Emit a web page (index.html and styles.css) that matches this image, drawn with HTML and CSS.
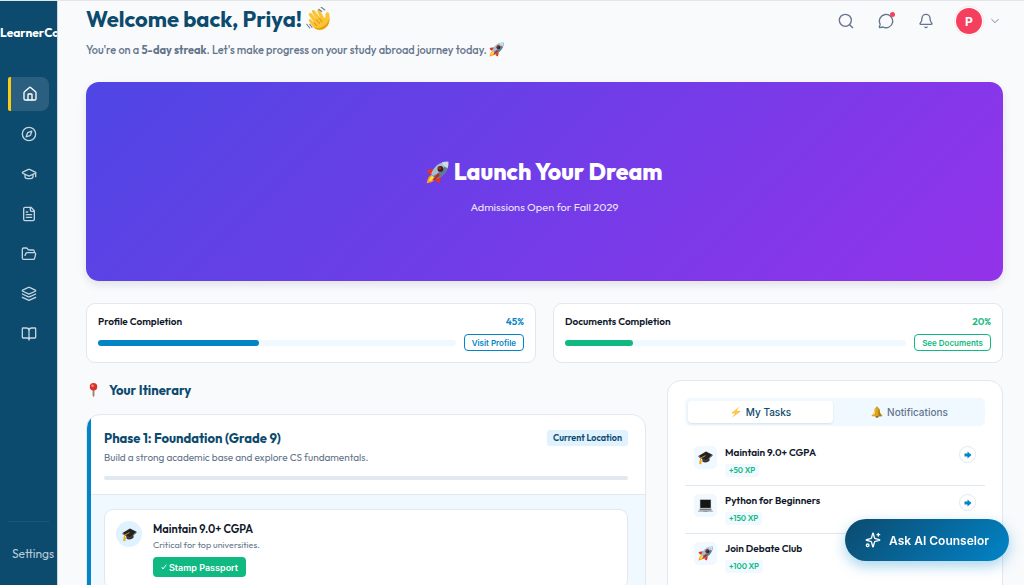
FILE: index.html
```html
<!DOCTYPE html>
<html lang="en">
<head>
	<meta charset="utf-8">
	<meta name="viewport" content="width=device-width,initial-scale=1">
	<title>Dashboard</title>
	<link rel="stylesheet" href="styles.css">
</head>
<body>
	<svg class="sprite" aria-hidden="true">
		<symbol id="rocket" viewBox="0 0 32 32">
			<path d="M10 11L1 13l3 5 8 0z" fill="#e8321f"/>
			<path d="M21 22l-2 9-5-3 0-8z" fill="#e8321f"/>
			<path d="M8 19c-4 1-6 6-7 12 6-1 11-3 12-7z" fill="#f9a01b"/>
			<path d="M9 21c-3 1-4 4-5 7 4-1 6-2 7-5z" fill="#ffe14d"/>
			<path d="M31 1C20 0 11 7 7 18l7 7C25 21 32 12 31 1z" fill="#a9bfce"/>
			<path d="M31 1C25 10 18 17 10 21l4 4C25 21 32 12 31 1z" fill="#5f7b90"/>
			<path d="M31 1c-3 0-6 0-9 1 2 4 4 6 8 8 1-3 1-6 1-9z" fill="#ccdce6"/>
			<circle cx="20" cy="11" r="4" fill="#3b1d1f"/>
			<circle cx="19" cy="10" r="2" fill="#a42a26"/>
			<path d="M17 17l-8 9 2 1 8-7z" fill="#cc2218"/>
		</symbol>
		<symbol id="wave" viewBox="0 0 32 32">
			<path d="M9 26L4 19c-1-3 2-4 3-2l4 4-7-10c-1-3 2-4 4-2l6 8-6-10c-1-3 2-4 4-2l7 10-4-9c-1-3 3-4 4-1l5 9c2 1 2-1 2-4 0-4 4-4 5-1 1 6 1 13-4 18-6 6-13 5-18-1z" fill="#fbc434"/>
			<path d="M11 21l3 4M14 17l4 5M18 15l3 5" fill="none" stroke="#d98b12" stroke-width="1.300" stroke-linecap="round"/>
			<path d="M31 14c1 7-2 13-8 15-5 2-10 1-14-3 6 3 12 3 17-2 3-3 5-6 5-10z" fill="#e8990f"/>
			<path d="M17 3l4 3M20 0l5 4M1 23l4 5M5 23l3 4" fill="none" stroke="#747b83" stroke-width="1.500" stroke-linecap="round"/>
		</symbol>
		<symbol id="pin" viewBox="0 0 32 32">
			<path d="M14 13h4v13l-2 5-2-5z" fill="#a0826e"/>
			<circle cx="16" cy="8" r="8" fill="#d8322c"/>
			<circle cx="14" cy="6" r="3" fill="#f58478"/>
		</symbol>
		<symbol id="cap" viewBox="0 0 32 32">
			<path d="M8 15l15-3 2 10c-4 5-11 6-15 3z" fill="#343434"/>
			<path d="M1 13L17 3l14 7-14 12z" fill="#222"/>
			<path d="M1 13l16 9v2L1 15zM17 22l14-12v2L17 24z" fill="#474747"/>
			<path d="M16 12L6 17l-1 6" fill="none" stroke="#e8960f" stroke-width="2"/>
			<path d="M4 21l4 1-1 9-5-2z" fill="#f3a825"/>
		</symbol>
		<symbol id="laptop" viewBox="0 0 32 32">
			<path d="M4 3h24v19H4z" fill="#a9acb0"/>
			<path d="M5 4h22v17H5z" fill="#151515"/>
			<path d="M4 22h24l4 7H0z" fill="#c4c7ca"/>
			<path d="M5 23h22l2 3H3z" fill="#75797d"/>
			<path d="M12 27h8l1 2H11zM0 29h32v1H0z" fill="#999ca0"/>
		</symbol>
		<symbol id="bolt" viewBox="0 0 32 32">
			<path d="M26 1L3 19l11 1-9 11 24-17-12-2z" fill="#ffb62e"/>
			<path d="M23 4L7 18l10 0-6 8 14-11-12-1z" fill="#ffcf57"/>
		</symbol>
		<symbol id="goldbell" viewBox="0 0 32 32">
			<circle cx="16" cy="27" r="4" fill="#7c5a12"/>
			<path d="M14 2h4v4h-4z" fill="#a67816"/>
			<path d="M16 4c6 0 8 5 8 10 0 6 2 8 6 10v3H2v-3c4-2 6-4 6-10 0-5 2-10 8-10z" fill="#dba520"/>
			<path d="M13 7c-3 3-1 11-4 16H5c4-4 3-8 4-12 1-3 2-4 4-4z" fill="#f8dc74"/>
			<path d="M20 6c5 5 1 11 8 18v3h-8c-2-8 1-13 0-21z" fill="#ae7b14"/>
		</symbol>
		<symbol id="arrow" viewBox="0 0 16 16">
			<path d="M1 5h6V1l8 7-8 7v-4H1z" fill="#0284c7"/>
		</symbol>
	</svg>

	<div class="app">
		<aside class="sidebar">
			<a class="brand" href="#">LearnerCo</a>
			<nav class="nav">
				<a href="#" class="nav-item active" aria-label="Home"><svg class="icon" viewBox="0 0 24 24"><path d="M15 21v-8a1 1 0 0 0-1-1h-4a1 1 0 0 0-1 1v8"/><path d="M3 10a2 2 0 0 1 .7-1.500l7-6a2 2 0 0 1 2.600 0l7 6A2 2 0 0 1 21 10v9a2 2 0 0 1-2 2H5a2 2 0 0 1-2-2z"/></svg></a>
				<a href="#" class="nav-item" aria-label="Explore"><svg class="icon" viewBox="0 0 24 24"><circle cx="12" cy="12" r="10"/><path d="M16.200 7.800l-1.800 5.400a2 2 0 0 1-1.200 1.200l-5.400 1.800 1.800-5.400a2 2 0 0 1 1.200-1.200z"/></svg></a>
				<a href="#" class="nav-item" aria-label="Universities"><svg class="icon" viewBox="0 0 24 24"><path d="M21.400 10.900a1 1 0 0 0 0-1.800L12.800 5.200a2 2 0 0 0-1.600 0L2.600 9.100a1 1 0 0 0 0 1.800l8.600 3.900a2 2 0 0 0 1.600 0z"/><path d="M22 10v6M6 12.500V16a6 3 0 0 0 12 0v-3.500"/></svg></a>
				<a href="#" class="nav-item" aria-label="Applications"><svg class="icon" viewBox="0 0 24 24"><path d="M15 2H6a2 2 0 0 0-2 2v16a2 2 0 0 0 2 2h12a2 2 0 0 0 2-2V7z"/><path d="M14 2v4a2 2 0 0 0 2 2h4M10 9H8M16 13H8M16 17H8"/></svg></a>
				<a href="#" class="nav-item" aria-label="Documents"><svg class="icon" viewBox="0 0 24 24"><path d="M6 14l1.500-2.900A2 2 0 0 1 9.200 10H20a2 2 0 0 1 1.900 2.500l-1.500 6a2 2 0 0 1-2 1.500H4a2 2 0 0 1-2-2V5a2 2 0 0 1 2-2h3.900a2 2 0 0 1 1.700.9l.8 1.200a2 2 0 0 0 1.700.9H18a2 2 0 0 1 2 2v2"/></svg></a>
				<a href="#" class="nav-item" aria-label="Portfolio"><svg class="icon" viewBox="0 0 24 24"><path d="M12.800 2.200a2 2 0 0 0-1.600 0L2.600 6.100a1 1 0 0 0 0 1.800l8.600 3.900a2 2 0 0 0 1.600 0l8.600-3.900a1 1 0 0 0 0-1.800z"/><path d="M22 12l-9.200 4.200a2 2 0 0 1-1.600 0L2 12M22 17l-9.200 4.200a2 2 0 0 1-1.600 0L2 17"/></svg></a>
				<a href="#" class="nav-item" aria-label="Resources"><svg class="icon" viewBox="0 0 24 24"><path d="M12 7v14M3 18a1 1 0 0 1-1-1V4a1 1 0 0 1 1-1h5a4 4 0 0 1 4 4 4 4 0 0 1 4-4h5a1 1 0 0 1 1 1v13a1 1 0 0 1-1 1h-6a3 3 0 0 0-3 3 3 3 0 0 0-3-3z"/></svg></a>
			</nav>
			<div class="sidebar-foot"><a href="#">Settings</a></div>
		</aside>

		<main class="main">
			<header class="topbar">
				<div>
					<h1>Welcome back, Priya! <svg class="emoji-xl"><use href="#wave"/></svg></h1>
					<p class="streak">You're on a <strong>5-day streak</strong>. Let's make progress on your study abroad journey today. <svg class="emoji-md"><use href="#rocket"/></svg></p>
				</div>
				<div class="actions">
					<button type="button" aria-label="Search"><svg class="icon" viewBox="0 0 24 24"><circle cx="11" cy="11" r="9"/><path d="M22 22l-4.500-4.500"/></svg></button>
					<button type="button" aria-label="Messages" class="has-dot"><svg class="icon" viewBox="0 0 24 24"><path d="M3 16.300a2 2 0 0 1 .1 1.200l-1.100 3.300a1 1 0 0 0 1.200 1.200l3.400-1a2 2 0 0 1 1.100.1A10 10 0 1 0 3 16.300"/></svg></button>
					<button type="button" aria-label="Alerts"><svg class="icon" viewBox="0 0 24 24"><path d="M10.300 21a2 2 0 0 0 3.400 0M3.300 15.300A1 1 0 0 0 4 17h16a1 1 0 0 0 .7-1.700C19.400 14 18 12.500 18 8A6 6 0 0 0 6 8c0 4.500-1.400 6-2.700 7.300"/></svg></button>
					<button type="button" class="profile" aria-label="Account"><span class="avatar">P</span><svg class="chevron" viewBox="0 0 24 24"><path d="M4 8l8 8 8-8"/></svg></button>
				</div>
			</header>

			<section class="banner">
				<h2><svg class="emoji-lg"><use href="#rocket"/></svg> Launch Your Dream</h2>
				<p>Admissions Open for Fall 2029</p>
			</section>

			<section class="stats">
				<div class="stat">
					<div class="stat-head"><span>Profile Completion</span><b>45%</b></div>
					<div class="stat-row">
						<div class="track"><div class="fill" style="width:45%"></div></div>
						<button type="button">Visit Profile</button>
					</div>
				</div>
				<div class="stat green">
					<div class="stat-head"><span>Documents Completion</span><b>20%</b></div>
					<div class="stat-row">
						<div class="track"><div class="fill" style="width:20%"></div></div>
						<button type="button">See Documents</button>
					</div>
				</div>
			</section>

			<div class="columns">
				<section class="itinerary">
					<h2><svg class="emoji-md"><use href="#pin"/></svg>Your Itinerary</h2>
					<article class="phase">
						<div class="phase-head">
							<div class="phase-title">
								<h3>Phase 1: Foundation (Grade 9)</h3>
								<span class="badge">Current Location</span>
							</div>
							<p>Build a strong academic base and explore CS fundamentals.</p>
							<div class="phase-track"></div>
						</div>
						<div class="phase-body">
							<div class="step">
								<span class="step-icon"><svg class="emoji-md"><use href="#cap"/></svg></span>
								<div>
									<h4>Maintain 9.0+ CGPA</h4>
									<p>Critical for top universities.</p>
									<button type="button"><svg class="check" viewBox="0 0 12 12"><path d="M2 7l2 3 6-8"/></svg>Stamp Passport</button>
								</div>
							</div>
						</div>
					</article>
				</section>

				<section class="tasks">
					<div class="tabs" role="tablist">
						<button type="button" role="tab" aria-selected="true"><svg class="emoji-sm"><use href="#bolt"/></svg>My Tasks</button>
						<button type="button" role="tab" aria-selected="false"><svg class="emoji-sm"><use href="#goldbell"/></svg>Notifications</button>
					</div>
					<ul class="task-list">
						<li>
							<span class="task-icon"><svg class="emoji-md"><use href="#cap"/></svg></span>
							<div class="task-text"><h4>Maintain 9.0+ CGPA</h4><span class="xp">+50 XP</span></div>
							<button type="button" aria-label="Open Maintain 9.0+ CGPA"><svg class="arrow"><use href="#arrow"/></svg></button>
						</li>
						<li>
							<span class="task-icon"><svg class="emoji-md"><use href="#laptop"/></svg></span>
							<div class="task-text"><h4>Python for Beginners</h4><span class="xp">+150 XP</span></div>
							<button type="button" aria-label="Open Python for Beginners"><svg class="arrow"><use href="#arrow"/></svg></button>
						</li>
						<li>
							<span class="task-icon"><svg class="emoji-md"><use href="#rocket"/></svg></span>
							<div class="task-text"><h4>Join Debate Club</h4><span class="xp">+100 XP</span></div>
							<button type="button" aria-label="Open Join Debate Club"><svg class="arrow"><use href="#arrow"/></svg></button>
						</li>
					</ul>
				</section>
			</div>
		</main>
	</div>

	<button type="button" class="ask">
		<svg class="icon" viewBox="0 0 24 24"><path d="M9.900 15.500A2 2 0 0 0 8.500 14.100L2.400 12.500a.5.500 0 0 1 0-1L8.500 9.900A2 2 0 0 0 9.900 8.500l1.600-6.100a.5.500 0 0 1 1 0l1.600 6.100a2 2 0 0 0 1.400 1.400l6.100 1.600a.5.500 0 0 1 0 1l-6.100 1.600a2 2 0 0 0-1.400 1.400l-1.600 6.100a.5.500 0 0 1-1 0z"/><path d="M20 2v4M22 4h-4"/><circle cx="4" cy="20" r="2"/></svg>
		Ask AI Counselor
	</button>
</body>
</html>
```

FILE: styles.css
```css
*{margin:0;padding:0;box-sizing:border-box;}
body{height:100vh;overflow:hidden;border-top:1px solid #e3e5e7;background:#f8fafc;color:#0f172a;font-family:Outfit,Lato,sans-serif;font-size:12px;}
button{border:0;background:none;cursor:pointer;font-family:Inter,sans-serif;}
a{color:inherit;text-decoration:none;}
svg{flex:none;}
.sprite{position:absolute;width:0;height:0;}

.icon,.chevron,.check{fill:none;stroke:currentColor;stroke-width:2;stroke-linecap:round;stroke-linejoin:round;}
.icon{width:16px;height:16px;}
.emoji-xl{width:24px;height:24px;vertical-align:-4px;}
.emoji-lg{width:23px;height:23px;vertical-align:-4px;}
.emoji-md{width:15px;height:15px;vertical-align:-3px;}
.emoji-sm{width:12px;height:12px;}

.app{display:flex;height:100%;}

/* sidebar */
.sidebar{display:flex;flex-direction:column;flex:none;width:58px;overflow:hidden;border-right:1px solid #cbd5e1;background:#0c4a6e;color:#fff;}
.brand{padding:24px 0;font-size:12px;font-weight:700;line-height:16px;white-space:nowrap;}
.nav{display:flex;flex-direction:column;gap:6px;padding:12px 8px;}
.nav-item{display:flex;align-items:center;justify-content:center;height:34px;border-radius:8px;color:#c5d5df;}
.nav-item.active{border-left:3px solid #facc15;border-radius:2px 8px 8px 2px;background:#2b5f7f;color:#fff;}
.sidebar-foot{margin:auto 8px 0;padding:24px 0 23px 4px;border-top:1px solid #1c5678;color:#b6cad6;font-size:12px;line-height:16px;white-space:nowrap;}

/* header */
.main{flex:1;min-width:0;padding:3px 21px 0 28px;}
.topbar{display:flex;justify-content:space-between;align-items:flex-start;margin-bottom:24px;}
h1{margin-bottom:8px;color:#0c4a6e;font-size:22px;font-weight:700;line-height:30px;}
.streak{color:#64748b;font-size:11px;font-weight:500;line-height:16px;}
.streak strong{font-weight:700;}
.actions{display:flex;align-items:center;gap:16px;padding:4px 3px 0 0;color:#64748b;}
.actions button{display:flex;align-items:center;justify-content:center;width:24px;height:26px;color:inherit;}
.has-dot{position:relative;}
.has-dot:after{content:'';position:absolute;top:4px;right:3px;width:5px;height:5px;border-radius:50%;background:#f43f5e;}
.actions .profile{width:auto;gap:8px;margin-left:2px;}
.avatar{display:flex;align-items:center;justify-content:center;width:26px;height:26px;border-radius:50%;background:#f43f5e;box-shadow:0 0 0 1px #fff,0 0 0 2px #ffe4e6;color:#fff;font-size:12px;font-weight:700;}
.chevron{width:10px;height:10px;}

/* banner */
.banner{display:flex;flex-direction:column;align-items:center;justify-content:center;min-height:199px;margin-bottom:22px;padding-top:8px;border-radius:13px;background:linear-gradient(135deg,#4f46e5,#9333ea);box-shadow:0 4px 8px rgba(15,23,42,.1);color:#fff;text-align:center;}
.banner h2{margin-bottom:12px;font-size:23px;font-weight:800;line-height:30px;}
.banner p{color:#e9e3fc;font-size:11px;line-height:16px;}

/* completion cards */
.stats{display:grid;grid-template-columns:1fr 1fr;gap:17px;margin-bottom:17px;}
.stat{padding:10px 11px 11px;border:1px solid #e2e8f0;border-radius:9px;background:#fff;color:#0284c7;}
.stat.green{color:#10b981;}
.stat-head{display:flex;justify-content:space-between;margin-bottom:4px;font-size:10px;font-weight:600;line-height:16px;}
.stat-head b{font-weight:600;}
.stat-head span{color:#0f172a;}
.stat-row{display:flex;align-items:center;gap:8px;}
.track{flex:1;height:6px;border-radius:3px;background:#f0f9ff;}
.fill{height:6px;border-radius:3px;background:currentColor;}
.stat button{height:17px;padding:0 7px;border:1px solid currentColor;border-radius:4px;color:inherit;font-size:8px;font-weight:600;}

/* itinerary */
.columns{display:grid;grid-template-columns:5fr 3fr;gap:21px;align-items:start;}
.itinerary h2{display:flex;align-items:center;gap:8px;margin-bottom:14px;color:#0c4a6e;font-size:13px;font-weight:700;line-height:20px;}
.phase{overflow:hidden;padding-left:4px;border:1px solid #e2e8f0;border-radius:14px;background:linear-gradient(90deg,#0284c7 4px,#fff 4px);}
.phase-head{padding:14px 17px 14px 13px;border-bottom:1px solid #e2e8f0;}
.phase-title{display:flex;align-items:center;justify-content:space-between;margin-bottom:4px;}
.phase h3{color:#0c4a6e;font-size:13px;font-weight:700;line-height:18px;}
.badge{padding:0 6px;border-radius:3px;background:#e0f2fe;color:#0c4a6e;font-size:9px;font-weight:600;line-height:16px;}
.phase p{color:#64748b;font-size:10px;line-height:14px;}
.phase-track{height:4px;margin-top:11px;border-radius:2px;background:#e2e8f0;}
.phase-body{padding:14px 17px 14px 13px;background:#f0f9ff;}
.step{display:flex;gap:11px;padding:11px;border:1px solid #e2e8f0;border-radius:9px;background:#fff;}
.step-icon{display:flex;align-items:center;justify-content:center;flex:none;width:26px;height:26px;border-radius:50%;background:#e0f2fe;}
h4{font-size:11px;font-weight:600;line-height:16px;}
.phase .step p{font-size:9px;line-height:16px;}
.step button{display:flex;align-items:center;gap:2px;height:20px;margin-top:4px;padding:0 8px;border-radius:4px;background:#10b981;color:#fff;font-size:9px;font-weight:600;}
.check{width:6px;height:6px;}

/* tasks */
.tasks{min-height:280px;padding:17px;border:1px solid #e2e8f0;border-radius:14px;background:#fff;}
.tabs{display:grid;grid-template-columns:1fr 1fr;gap:4px;margin-bottom:12px;padding:3px;border-radius:5px;background:#f0f9ff;}
.tabs button{display:flex;align-items:center;justify-content:center;gap:4px;height:22px;border-radius:4px;color:#64748b;font-size:10px;font-weight:500;}
.tabs button[aria-selected=true]{background:#fff;box-shadow:0 1px 2px rgba(15,23,42,.1);color:#0c4a6e;}
.task-list{list-style:none;}
.task-list li{display:flex;align-items:flex-start;gap:8px;height:48px;padding:8px 9px 0;border-bottom:1px solid #e2e8f0;}
.task-list li:last-child{border-bottom:0;}
.task-icon{display:flex;align-items:center;justify-content:center;width:23px;height:23px;border-radius:5px;background:#f0f9ff;}
.task-text{flex:1;}
.task-text h4{font-size:10px;line-height:14px;}
.xp{display:block;width:max-content;margin-top:4px;padding:0 4px;border-radius:3px;background:#f0f9ff;color:#10b981;font-size:8px;font-weight:600;line-height:13px;}
.task-list button{display:flex;align-items:center;justify-content:center;width:17px;height:17px;border:1px solid #e2e8f0;border-radius:50%;}
.arrow{width:8px;height:8px;}

.ask{position:fixed;right:15px;bottom:24px;display:flex;align-items:center;gap:8px;height:42px;padding:0 20px;border-radius:21px;background:linear-gradient(135deg,#0c4a6e,#0284c7);box-shadow:0 5px 14px rgba(2,132,199,.35);color:#fff;font-size:12px;font-weight:600;}
```
